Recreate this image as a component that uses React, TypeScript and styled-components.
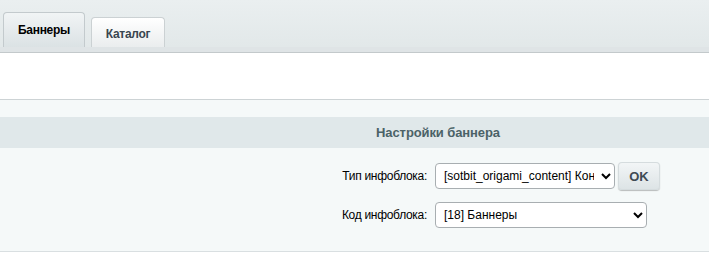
import { createGlobalStyle, styled } from "styled-components"

const GlobalStyle = createGlobalStyle`
body {
    margin: 0;
    background: #fff;
    font-family: "Liberation Sans", Arial, sans-serif;
    overflow: hidden;
}
`

const TabBar = styled.div`
display: flex;
align-items: flex-end;
gap: 6px;
height: 47px;
padding-left: 3px;
background: linear-gradient(#eaeff0, #e2e8e9);
`

const Tab = styled.div<{ $active?: boolean }>`
box-sizing: border-box;
display: flex;
align-items: center;
justify-content: center;
width: ${({ $active }) => ($active ? "82px" : "74px")};
height: ${({ $active }) => ($active ? "35px" : "30px")};
border: 1px solid ${({ $active }) => ($active ? "#c3cacd" : "#cbd1d3")};
border-bottom: none;
border-radius: 4px 4px 0 0;
background: ${({ $active }) =>
    $active ? "linear-gradient(#f1f4f5, #dbe2e4)" : "linear-gradient(#ffffff, #eaedee)"};
color: ${({ $active }) => ($active ? "#000" : "#3a4650")};
font-size: 12px;
letter-spacing: -0.3px;
font-weight: bold;
padding-top: ${({ $active }) => ($active ? "0" : "2px")};
`

const TabBand = styled.div`
height: 5px;
background: #dfe4e6;
border-bottom: 1px solid #c3c9cb;
`

const Toolbar = styled.div`
height: 46px;
background: #fff;
border-bottom: 1px solid #cdd3d5;
`

const Spacer = styled.div`
height: 17px;
background: #f5f9f9;
`

const Form = styled.div`
background: #f5f9f9;
border-bottom: 1px solid #d9dfe1;
`

const Heading = styled.div`
height: 31px;
line-height: 31px;
padding-left: 167px;
text-align: center;
background: #e0e8ea;
color: #4b6267;
font-size: 13px;
letter-spacing: -0.1px;
font-weight: bold;
`

const Rows = styled.div`
display: grid;
grid-template-columns: 434px 1fr;
row-gap: 12px;
align-items: center;
padding: 14px 0 23px;
`

const Label = styled.label`
text-align: right;
padding-right: 7px;
font-size: 12px;
letter-spacing: -0.3px;
color: #000;
`

const Field = styled.div`
display: flex;
align-items: center;
gap: 3px;
padding-left: 1px;
`

const Select = styled.select<{ $width: number }>`
box-sizing: border-box;
width: ${({ $width }) => $width}px;
height: 26px;
padding: 0 4px;
border: 1px solid #a8aeb1;
border-radius: 4px;
background: #fff;
color: #000;
font-family: "Liberation Sans", Arial, sans-serif;
font-size: 12px;
`

const Button = styled.button`
box-sizing: border-box;
width: 42px;
height: 28px;
border: none;
border-radius: 4px;
background: linear-gradient(#f3f6f7, #dce3e5);
box-shadow: 0 1px 1px rgba(0, 0, 0, 0.25), inset 0 0 0 1px #d5dcde;
color: #3f4b54;
font-family: "Liberation Sans", Arial, sans-serif;
font-size: 13px;
font-weight: bold;
`

export default function App() {
  return (
    <>
      <GlobalStyle />
      <TabBar>
        <Tab $active>Баннеры</Tab>
        <Tab>Каталог</Tab>
      </TabBar>
      <TabBand />
      <Toolbar />
      <Spacer />
      <Form>
        <Heading>Настройки баннера</Heading>
        <Rows>
          <Label>Тип инфоблока:</Label>
          <Field>
            <Select $width={180} defaultValue="content">
              <option value="content">[sotbit_origami_content] Контент</option>
            </Select>
            <Button>OK</Button>
          </Field>
          <Label>Код инфоблока:</Label>
          <Field>
            <Select $width={212} defaultValue="18">
              <option value="18">[18] Баннеры</option>
            </Select>
          </Field>
        </Rows>
      </Form>
    </>
  )
}
